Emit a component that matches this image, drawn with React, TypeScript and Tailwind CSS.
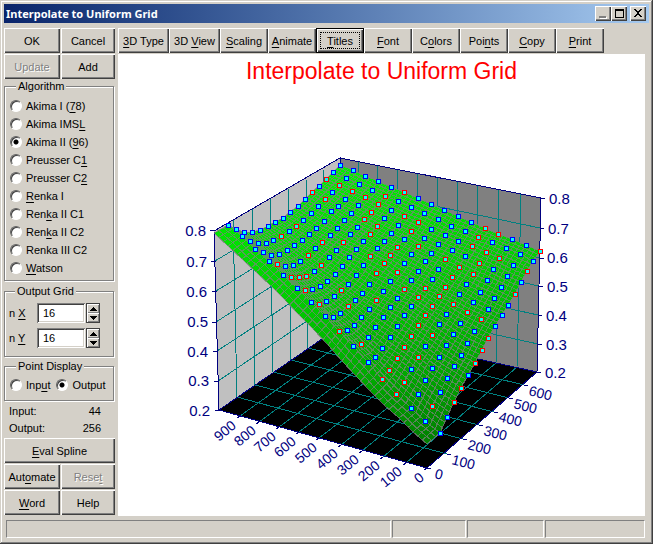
import { useState, type ReactNode } from "react";

const ALGORITHMS = [
  "Akima I (&78)",
  "Akima IMS&L",
  "Akima II (&96)",
  "Preusser C&1",
  "Preusser C&2",
  "&Renka I",
  "Ren&ka II C1",
  "Ren&ka II C2",
  "Renka III C2",
  "&Watson",
];

const TOOLBAR = [
  { label: "&3D Type", width: "w-[51px]" },
  { label: "3D &View", width: "w-[51px]" },
  { label: "&Scaling", width: "w-12" },
  { label: "&Animate", width: "w-12" },
  { label: "&Titles", width: "w-12" },
  { label: "&Font", width: "w-12" },
  { label: "C&olors", width: "w-12" },
  { label: "Poi&nts", width: "w-12" },
  { label: "&Copy", width: "w-12" },
  { label: "&Print", width: "w-12" },
];

// Projected 16 x 16 output grid, one string per y row. "r" marks the points drawn in red.
const GRID = [
  "340,165 333,172 326,179r 319,186 312,192r 305,199 298,206 290,212 283,218 275,222 268,226 260,230 252,232 244,232 236,229 228,225",
  "353,170 346,178 339,185r 332,192 325,199r 318,206 311,213 303,220 296,226r 289,231 281,236r 273,240 266,243 258,243 250,241 242,236",
  "365,176 359,184 352,191r 345,199 338,206 331,211 324,221 316,228 309,234 302,240 294,245 287,250 279,254 271,255 263,252 255,249",
  "378,181 372,190 365,197r 358,205 351,213 344,220 337,228 330,235 322,242r 315,248 308,255r 300,261 293,265 285,266 277,264r 269,261",
  "391,187 385,196r 378,204r 371,212r 364,219r 357,227 350,234 343,242r 336,250 329,257 321,265r 314,271 306,276r 299,277r 291,277r 283,275",
  "404,192r 398,201 391,210 384,218 377,226r 370,234r 363,241 356,249 349,257 342,266 335,274 327,281 320,286 312,289 305,290r 297,288",
  "418,198 411,207 404,216r 398,225 391,233 384,241 377,248 370,256r 363,265 356,275 348,284 341,290r 334,296 326,301 319,304r 311,302",
  "431,204 424,213 418,222r 411,231r 404,239 397,247r 390,255r 384,263r 376,273r 369,284 362,293 355,300 348,306r 340,313 333,317 325,316",
  "444,210 438,219 431,229 424,238 418,246r 411,254 404,263 397,272r 390,281 383,291 376,300r 369,309 361,317 354,325 347,330 339,331r",
  "458,216 451,226 445,235 438,244 431,253 425,261 418,271 411,280 404,289r 397,298 390,307 383,317 375,327 368,337 361,344r 353,346",
  "471,222 465,231 458,241 452,250 445,259r 438,269 432,279 425,288r 418,297r 411,306 404,315 397,326 390,337 382,348 375,357 368,362",
  "485,228r 478,237r 472,246r 465,256 459,267r 452,277r 445,287r 439,296r 432,306r 425,315r 418,325r 411,336r 404,347r 397,358r 389,370r 382,379r",
  "498,234r 492,242 486,252r 479,263r 473,274r 466,284 459,294 453,304r 446,314 439,324 432,335r 425,346 418,357r 411,369 404,382r 396,394r",
  "512,239 506,248 499,258r 493,269 487,280 480,292 473,302 467,312r 460,323 453,334 446,345 439,357 432,368 425,380 418,394 411,408",
  "526,245 520,254 513,265 507,276 501,287 494,298 488,309 481,319r 474,331 467,343 461,355 454,366 447,378 440,392 432,406r 425,421",
  "540,251r 533,261 527,271r 521,282 515,294r 508,305 502,315 495,326 488,338r 482,350r 475,363r 468,375 461,388r 454,402r 447,417 440,433",
];

// The surface runs a little past the last column of points.
const FRONT_EDGE =
  "214,233 228,246 242,259 256,272 271,286 285,300 299,315 313,329 328,345 342,361 356,376 370,391 384,405 399,418 413,432 427,444";

type Pt = { x: number; y: number; red: boolean };

const parseRow = (row: string): Pt[] =>
  row.split(" ").map((s) => {
    const [x, y] = s.replace("r", "").split(",").map(Number);
    return { x, y, red: s.endsWith("r") };
  });

const points = GRID.map(parseRow);
const front = parseRow(FRONT_EDGE);
const mesh = points.map((row, i) => [...row, front[i]]);

const toPath = (pts: { x: number; y: number }[]) =>
  "M" + pts.map((p) => `${p.x.toFixed(1)} ${p.y.toFixed(1)}`).join("L");

const mix = (a: Pt, b: Pt, t: number) => ({ x: a.x + (b.x - a.x) * t, y: a.y + (b.y - a.y) * t });

const SUB = 3;

function meshLines(grid: Pt[][]) {
  const out: string[] = [];
  for (let i = 0; i < grid.length - 1; i++) {
    for (let k = 0; k < SUB; k++) {
      out.push(toPath(grid[i].map((p, j) => mix(p, grid[i + 1][j], k / SUB))));
    }
  }
  out.push(toPath(grid[grid.length - 1]));
  return out.join("");
}

const transpose = (grid: Pt[][]) => grid[0].map((_, j) => grid.map((row) => row[j]));

const meshPath = meshLines(mesh) + meshLines(transpose(mesh));
const outline =
  toPath([
    ...mesh[0],
    ...front,
    ...[...mesh[15]].reverse(),
    ...mesh.map((row) => row[0]).reverse(),
  ]) + "Z";

const WALL_GRID =
  "M233 219L237 397M252 208L255 385M270 198L273 372M288 188L291 360M306 178L308 348M323 168L325 337" +
  "M215 261L340 186M216 291L340 215M216 322L339 243M217 351L339 271M218 381L338 300" +
  "M359 162L357 332M378 166L376 336M398 170L396 341M418 174L415 345M438 178L435 349M458 182L455 354M478 186L475 358M499 190L496 363M521 194L517 367" +
  "M340 186L540 228M340 215L540 258M339 243L539 286M339 271L538 315M338 300L538 344";

const FLOOR_GRID =
  "M240 416L357 332M259 422L376 336M279 427L396 341M299 432L415 345M319 438L435 349M341 445L455 354M362 451L475 358M383 457L496 363M406 463L517 367" +
  "M237 397L447 454M255 385L463 439M273 372L479 425M291 360L494 412M308 348L509 398M325 337L524 385";

const AXES =
  "M340 165V158L214 231L219 410L427 468L537 372L541 198L340 158M219 410L338 328L537 372" +
  "M210 230h5M211 261h5M212 291h5M212 322h5M213 351h5M214 381h5M215 410h5" +
  "M541 198h4M540 228h4M540 258h4M539 286h4M538 315h4M538 344h4M537 372h4" +
  "M240 416l-3 2M259 422l-3 2M279 427l-3 2M299 432l-3 2M319 438l-3 2M341 445l-3 2M362 451l-3 2M383 457l-3 2M406 463l-3 2M427 468l-3 2" +
  "M427 468l4 1M447 454l4 1M463 439l4 1M479 425l4 1M494 412l4 1M509 398l4 1M524 385l4 1";

const LEFT_LABELS = [
  ["0.8", 206, 236],
  ["0.7", 207, 267],
  ["0.6", 207, 297],
  ["0.5", 208, 327],
  ["0.4", 208, 357],
  ["0.3", 209, 386],
  ["0.2", 210, 416],
] as const;

const RIGHT_LABELS = [
  ["0.8", 549, 204],
  ["0.7", 548, 234],
  ["0.6", 547, 263],
  ["0.5", 547, 292],
  ["0.4", 546, 321],
  ["0.3", 546, 350],
  ["0.2", 545, 378],
] as const;

const X_LABELS = [
  ["900", 237, 427],
  ["800", 257, 432],
  ["700", 277, 438],
  ["600", 297, 443],
  ["500", 318, 449],
  ["400", 339, 455],
  ["300", 360, 461],
  ["200", 381, 467],
  ["100", 403, 473],
  ["0", 425, 479],
] as const;

const Y_LABELS = [
  ["0", 434, 478],
  ["100", 451, 464],
  ["200", 467, 449],
  ["300", 483, 435],
  ["400", 498, 421],
  ["500", 513, 408],
  ["600", 528, 395],
] as const;

function Mnemonic({ text }: { text: string }) {
  const at = text.indexOf("&");
  if (at < 0) return <>{text}</>;
  return (
    <>
      {text.slice(0, at)}
      <u className="underline-offset-2">{text[at + 1]}</u>
      {text.slice(at + 2)}
    </>
  );
}

type ButtonProps = { label: string; className?: string; disabled?: boolean; focused?: boolean };

function Button({ label, className = "", disabled, focused }: ButtonProps) {
  return (
    <button
      type="button"
      disabled={disabled}
      className={`h-[25px] whitespace-nowrap text-center ${
        focused
          ? "border border-black p-[3px] shadow-[inset_1px_1px_0_#fff,inset_-1px_-1px_0_#404040,inset_-2px_-2px_0_#808080]"
          : "shadow-[inset_1px_1px_0_#fff,inset_-1px_-1px_0_#404040,inset_-2px_-2px_0_#808080]"
      } ${disabled ? "text-[#808080] [text-shadow:1px_1px_0_#fff]" : ""} ${className}`}
    >
      {focused ? (
        <span className="flex h-full items-center justify-center border border-dotted border-black">
          <span><Mnemonic text={label} /></span>
        </span>
      ) : (
        <Mnemonic text={label} />
      )}
    </button>
  );
}

function Group({ title, className = "", children }: { title: string; className?: string; children: ReactNode }) {
  return (
    <fieldset className={`mr-px min-w-0 border border-[#808080] shadow-[1px_1px_0_#fff,inset_1px_1px_0_#fff] ${className}`}>
      <legend className="ml-1.5 bg-[#d4d0c8] px-0.5 leading-3.5">{title}</legend>
      {children}
    </fieldset>
  );
}

type RadioProps = { name: string; label: string; checked: boolean; onChange: () => void };

function Radio({ name, label, checked, onChange }: RadioProps) {
  return (
    <label className="flex h-[18px] items-center gap-1">
      <input
        type="radio"
        name={name}
        checked={checked}
        onChange={onChange}
        className="size-3 shrink-0 appearance-none rounded-full border border-t-[#606060] border-r-white border-b-white border-l-[#606060] bg-white shadow-[inset_1px_1px_0_#404040] checked:bg-[radial-gradient(circle,#000_2px,#fff_3px)]"
      />
      <span className="whitespace-nowrap"><Mnemonic text={label} /></span>
    </label>
  );
}

function Spinner({ id, label, value, onChange }: { id: string; label: string; value: number; onChange: (n: number) => void }) {
  const arrow =
    "flex h-[9px] w-3 items-center justify-center bg-[#d4d0c8] shadow-[inset_1px_1px_0_#fff,inset_-1px_-1px_0_#808080]";
  return (
    <div className="flex h-5 items-center">
      <label htmlFor={id} className="w-7"><Mnemonic text={label} /></label>
      <input
        id={id}
        value={value}
        onChange={(e) => onChange(Number(e.target.value) || 0)}
        className="h-5 w-12 bg-white pl-1.5 shadow-[inset_1px_1px_0_#808080,inset_-1px_-1px_0_#fff,inset_2px_2px_0_#404040,inset_-2px_-2px_0_#d4d0c8]"
      />
      <span className="ml-px flex flex-col border border-[#404040]">
        <button type="button" aria-label="Increase" className={arrow} onClick={() => onChange(value + 1)}>
          <svg width="7" height="4" shapeRendering="crispEdges"><path d="M3 0h1v1h1v1h1v1h1v1H0V3h1V2h1V1h1z" /></svg>
        </button>
        <button type="button" aria-label="Decrease" className={arrow} onClick={() => onChange(value - 1)}>
          <svg width="7" height="4" shapeRendering="crispEdges"><path d="M0 0h7v1H6v1H5v1H4v1H3V3H2V2H1V1H0z" /></svg>
        </button>
      </span>
    </div>
  );
}

function CaptionButton({ label, children }: { label: string; children: ReactNode }) {
  return (
    <button
      type="button"
      aria-label={label}
      className="h-[15px] w-4 bg-[#d4d0c8] shadow-[inset_1px_1px_0_#fff,inset_-1px_-1px_0_#404040,inset_-2px_-2px_0_#808080]"
    >
      <svg width="16" height="15" shapeRendering="crispEdges">{children}</svg>
    </button>
  );
}

function Chart() {
  return (
    <svg viewBox="118 88 527 427" className="h-auto w-full" role="img" aria-label="Interpolated surface">
      <defs>
        <linearGradient id="surface" gradientUnits="userSpaceOnUse" x1="370" y1="170" x2="410" y2="444">
          <stop offset="0" stopColor="#00f000" />
          <stop offset="0.4" stopColor="#00d000" />
          <stop offset="0.75" stopColor="#00a800" />
          <stop offset="1" stopColor="#008000" />
        </linearGradient>
      </defs>
      <g shapeRendering="crispEdges" fill="none">
        <path d="M340 158L214 231L219 410L338 328Z" fill="#c0c0c0" />
        <path d="M340 158L541 198L537 372L338 328Z" fill="#808080" />
        <path d="M219 410L338 328L537 372L427 468Z" fill="#000" />
        <path d={WALL_GRID} stroke="#008080" />
        <path d={FLOOR_GRID} stroke="#008080" />
        <path d={AXES} stroke="#000080" />
        <path d={outline} fill="url(#surface)" />
        <path d={meshPath} stroke="#808080" strokeOpacity="0.7" />
        {points.flat().map((p) => (
          <g key={`${p.x}-${p.y}`}>
            <rect x={p.x - 2} y={p.y - 2} width="5" height="5" fill={p.red ? "#f00" : "#00f"} />
            <rect x={p.x - 1} y={p.y - 1} width="3" height="3" fill="#0ff" />
          </g>
        ))}
      </g>
      <g fill="#000080" className="text-[15px]">
        {LEFT_LABELS.map(([t, x, y]) => (
          <text key={t} x={x} y={y} textAnchor="end">{t}</text>
        ))}
        {RIGHT_LABELS.map(([t, x, y]) => (
          <text key={t} x={x} y={y}>{t}</text>
        ))}
      </g>
      <g fill="#000080" className="text-[14px]">
        {X_LABELS.map(([t, x, y]) => (
          <text key={t} transform={`translate(${x} ${y}) rotate(-40)`} textAnchor="end">{t}</text>
        ))}
        {Y_LABELS.map(([t, x, y]) => (
          <text key={t} transform={`translate(${x} ${y}) rotate(14)`}>{t}</text>
        ))}
      </g>
    </svg>
  );
}

export default function App() {
  const [algorithm, setAlgorithm] = useState(2);
  const [display, setDisplay] = useState("Output");
  const [nx, setNx] = useState(16);
  const [ny, setNy] = useState(16);

  return (
    <div className="flex min-h-screen flex-col bg-[#d4d0c8] px-1 pt-1 pb-1.5 font-['Liberation_Sans',Arial,sans-serif] text-[11px] leading-3.5 text-black shadow-[inset_-1px_-1px_0_#404040,inset_1px_1px_0_#d4d0c8,inset_-2px_-2px_0_#808080,inset_2px_2px_0_#fff]">
      <header className="flex h-[19px] items-center bg-linear-to-r from-[#0a246a] to-[#a6caf0] pr-[3px] pl-0.5">
        <h2 className="flex-1 font-['Noto_Sans',sans-serif] text-[11px] font-bold text-white">Interpolate to Uniform Grid</h2>
        <CaptionButton label="Minimize">
          <path d="M5 11h7v2H5z" fill="#fff" />
          <path d="M4 10h7v2H4z" fill="#808080" />
        </CaptionButton>
        <CaptionButton label="Maximize">
          <path d="M4 3h9v9H4zM5 5v6h7V5z" fillRule="evenodd" />
        </CaptionButton>
        <span className="w-[3px]" />
        <CaptionButton label="Close">
          <path d="M4 3h2v1h1v1h2V4h1V3h2v1h-1v1h-1v1H9v2h1v1h1v1h1v1h-2v-1H9V9H7v1H6v1H4v-1h1V9h1V8h1V6H6V5H5V4H4z" />
        </CaptionButton>
      </header>

      <div className="flex flex-1 gap-[3px] pt-[5px] pr-1">
        <aside className="w-[111px] shrink-0">
          <div className="grid grid-cols-[56px_54px] gap-px">
            <Button label="OK" />
            <Button label="Cancel" />
            <Button label="Update" disabled />
            <Button label="Add" />
          </div>

          <Group title="Algorithm" className="px-[5px] pb-[3px]">
            <div className="pt-1">
              {ALGORITHMS.map((name, i) => (
                <Radio key={name} name="algorithm" label={name} checked={algorithm === i} onChange={() => setAlgorithm(i)} />
              ))}
            </div>
          </Group>

          <Group title="Output Grid" className="mt-[3px] pb-2 pl-1">
            <div className="flex flex-col gap-[5px] pt-[5px]">
              <Spinner id="nx" label="n &X" value={nx} onChange={setNx} />
              <Spinner id="ny" label="n &Y" value={ny} onChange={setNy} />
            </div>
          </Group>

          <Group title="Point Display" className="mt-0.5 pb-1.5 pl-[5px]">
            <div className="flex gap-1.5 pt-[3px]">
              <Radio name="display" label="Inp&ut" checked={display === "Input"} onChange={() => setDisplay("Input")} />
              <Radio name="display" label="Output" checked={display === "Output"} onChange={() => setDisplay("Output")} />
            </div>
          </Group>

          <dl className="grid grid-cols-2 gap-y-[3px] py-[3px] pr-3.5 pl-[5px]">
            <dt>Input:</dt>
            <dd className="text-right">44</dd>
            <dt>Output:</dt>
            <dd className="text-right">256</dd>
          </dl>

          <div className="grid grid-cols-[56px_54px] gap-px">
            <Button label="&Eval Spline" className="col-span-2" />
            <Button label="Aut&omate" />
            <Button label="Rese&t" disabled />
            <Button label="&Word" />
            <Button label="Help" />
          </div>
        </aside>

        <main className="flex min-w-0 flex-1 flex-col">
          <nav className="flex pb-px">
            {TOOLBAR.map((b) => (
              <Button key={b.label} label={b.label} className={b.width} focused={b.label === "&Titles"} />
            ))}
          </nav>
          <section className="flex-1 bg-white">
            <h1 className="h-[34px] text-center text-[23px] leading-[34px] text-[#f00]">Interpolate to Uniform Grid</h1>
            <Chart />
          </section>
        </main>
      </div>

      <footer className="mt-1 ml-0.5 mr-1 flex h-[18px] gap-px">
        <div className="flex-1 border border-t-[#808080] border-r-white border-b-white border-l-[#808080]" />
        <div className="w-[74px] border border-t-[#808080] border-r-white border-b-white border-l-[#808080]" />
        <div className="w-[77px] border border-t-[#808080] border-r-white border-b-white border-l-[#808080]" />
        <div className="w-[100px] border border-t-[#808080] border-r-white border-b-white border-l-[#808080]" />
      </footer>
    </div>
  );
}
